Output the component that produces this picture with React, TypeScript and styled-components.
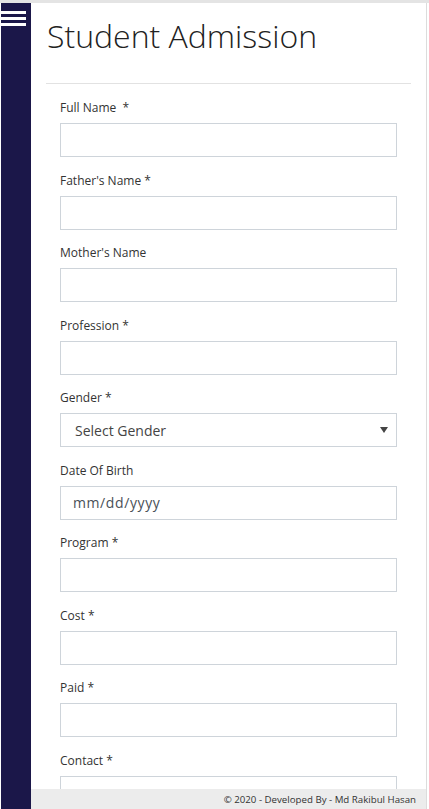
import React from "react";
import styled, { createGlobalStyle } from "styled-components";

const GlobalStyle = createGlobalStyle`
  html, body {
    margin: 0;
    padding: 0;
    background: #ffffff;
    overflow: hidden;
  }
  body {
    font-family: "Open Sans", "Noto Sans", sans-serif;
    color: #333;
  }
  * { box-sizing: border-box; }
`;

const Frame = styled.div`
  display: flex;
  height: 809px;
  border-top: 3px solid #e4e4e4;
  padding-left: 1px;
  padding-right: 2px;
`;

const Sidebar = styled.aside`
  width: 30px;
  flex-shrink: 0;
  background: #1b1749;
  padding-top: 8px;
  display: flex;
  flex-direction: column;
  gap: 3px;
`;

const Bar = styled.span`
  display: block;
  width: 25px;
  height: 3px;
  background: #ffffff;
`;

const Main = styled.main`
  flex: 1;
  border-right: 1px solid #dcdcdc;
  overflow: hidden;
`;

const Title = styled.h1`
  margin: 0;
  padding: 11px 0 0 16px;
  font-family: "Open Sans", sans-serif;
  font-weight: 300;
  font-size: 32px;
  line-height: 44px;
  color: #222;
`;

const Rule = styled.hr`
  margin: 25px 15px 10px 15px;
  border: 0;
  border-top: 1px solid #e2e2e2;
`;

const Form = styled.form`
  padding: 5px 29px 0 29px;
`;

const Group = styled.div`
  margin-bottom: 14.5px;
`;

const Label = styled.label`
  display: block;
  font-size: 12px;
  line-height: 18px;
  color: #333;
  margin-bottom: 6px;
  white-space: pre;
`;

const Field = styled.input`
  display: block;
  width: 100%;
  height: 34px;
  border: 1px solid #ced4da;
  border-radius: 0;
  padding: 0 12px;
  font-family: "Open Sans", sans-serif;
  font-size: 14px;
  color: #495057;
  background: #fff;
  &::placeholder {
    color: #495057;
    letter-spacing: 0.6px;
  }
`;

const SelectWrap = styled.div`
  position: relative;
`;

const Select = styled.select`
  display: block;
  width: 100%;
  height: 34px;
  border: 1px solid #ced4da;
  border-radius: 0;
  padding: 0 14px;
  font-family: "Open Sans", sans-serif;
  font-size: 14px;
  color: #444;
  background: #fff;
  appearance: none;
  -webkit-appearance: none;
`;

const Arrow = styled.svg`
  position: absolute;
  right: 9px;
  top: 14px;
  pointer-events: none;
`;

const Footer = styled.footer`
  position: fixed;
  left: 31px;
  right: 3px;
  bottom: 0;
  height: 20px;
  background: #ececec;
  display: flex;
  align-items: center;
  justify-content: flex-end;
  padding-right: 10px;
  font-size: 9.7px;
  color: #333;
`;

const fields: { label: string; type?: "select" | "date" }[] = [
  { label: "Full Name  *" },
  { label: "Father's Name *" },
  { label: "Mother's Name" },
  { label: "Profession *" },
  { label: "Gender *", type: "select" },
  { label: "Date Of Birth", type: "date" },
  { label: "Program *" },
  { label: "Cost *" },
  { label: "Paid *" },
  { label: "Contact *" },
];

export default function App() {
  return (
    <>
      <GlobalStyle />
      <Frame>
        <Sidebar>
          <Bar />
          <Bar />
          <Bar />
        </Sidebar>
        <Main>
          <Title>Student Admission</Title>
          <Rule />
          <Form>
            {fields.map((f) => (
              <Group key={f.label}>
                <Label>{f.label}</Label>
                {f.type === "select" ? (
                  <SelectWrap>
                    <Select defaultValue="">
                      <option value="">Select Gender</option>
                      <option value="m">Male</option>
                      <option value="f">Female</option>
                    </Select>
                    <Arrow width="8" height="6" viewBox="0 0 8 6">
                      <path d="M0 0 H8 L4 6 Z" fill="#444" />
                    </Arrow>
                  </SelectWrap>
                ) : f.type === "date" ? (
                  <Field type="text" placeholder="mm/dd/yyyy" />
                ) : (
                  <Field type="text" />
                )}
              </Group>
            ))}
          </Form>
        </Main>
      </Frame>
      <Footer>© 2020 - Developed By - Md Rakibul Hasan</Footer>
    </>
  );
}
